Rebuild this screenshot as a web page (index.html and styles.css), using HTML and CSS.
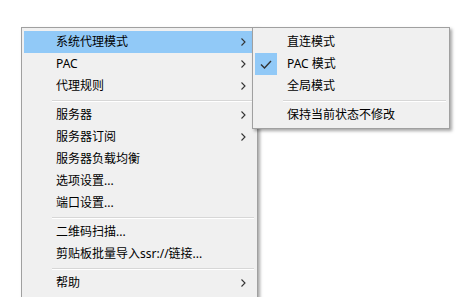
FILE: index.html
```html
<!DOCTYPE html>
<html>

<head>
    <meta charset="utf-8">
    <title>系统代理模式</title>
    <link rel="stylesheet" href="styles.css">
</head>

<body>
    <div class="desk">

        <div class="menu main">
            <div class="item active">系统代理模式<span class="arrow"><svg width="5" height="8" viewBox="0 0 5 8"><polyline points="0.5,0.5 4,4 0.5,7.5" /></svg></span></div>
            <div class="item">PAC<span class="arrow"><svg width="5" height="8" viewBox="0 0 5 8"><polyline points="0.5,0.5 4,4 0.5,7.5" /></svg></span></div>
            <div class="item">代理规则<span class="arrow"><svg width="5" height="8" viewBox="0 0 5 8"><polyline points="0.5,0.5 4,4 0.5,7.5" /></svg></span></div>
            <div class="sep"></div>
            <div class="item">服务器<span class="arrow"><svg width="5" height="8" viewBox="0 0 5 8"><polyline points="0.5,0.5 4,4 0.5,7.5" /></svg></span></div>
            <div class="item">服务器订阅<span class="arrow"><svg width="5" height="8" viewBox="0 0 5 8"><polyline points="0.5,0.5 4,4 0.5,7.5" /></svg></span></div>
            <div class="item">服务器负载均衡</div>
            <div class="item">选项设置...</div>
            <div class="item">端口设置...</div>
            <div class="sep"></div>
            <div class="item">二维码扫描...</div>
            <div class="item">剪贴板批量导入ssr://链接...</div>
            <div class="sep"></div>
            <div class="item">帮助<span class="arrow"><svg width="5" height="8" viewBox="0 0 5 8"><polyline points="0.5,0.5 4,4 0.5,7.5" /></svg></span></div>
        </div>

        <!-- submenu of 系统代理模式 -->
        <div class="menu sub">
            <div class="item">直连模式</div>
            <div class="item"><span class="check"><svg width="12" height="9" viewBox="0 0 12 9"><polyline points="1,4.5 4.5,8 11,1" /></svg></span>PAC 模式</div>
            <div class="item">全局模式</div>
            <div class="sep"></div>
            <div class="item">保持当前状态不修改</div>
        </div>

    </div>
</body>

</html>
```
FILE: styles.css
```css
html, body {
    margin: 0;
    height: 100%;
    overflow: hidden;
    background-color: #ffffff;
}

.desk {
    position: relative;
    box-sizing: border-box;
    height: 100%;
    padding: 27px 0 0 21px;
    font-family: "Noto Sans", "Noto Sans CJK SC", sans-serif;
    font-size: 12px;
    color: #000000;
}

.menu {
    box-sizing: border-box;
    background-color: #f0f0f0;
    border: 1px solid #a0a0a0;
    padding: 3px 2px;
    box-shadow: 2px 2px 3px rgba(0, 0, 0, 0.35);
}

.main {
    width: 237px;
    height: 300px;
}

.sub {
    position: absolute;
    left: 252px;
    top: 27px;
    width: 198px;
    padding-bottom: 2px;
}

.item {
    position: relative;
    height: 22px;
    line-height: 22px;
    padding-left: 32px;
    white-space: nowrap;
}

.active {
    background-color: #91c9f7;
}

.arrow {
    position: absolute;
    left: 217px;
    top: 7px;
    line-height: 0;
}

.arrow svg polyline {
    fill: none;
    stroke: #333333;
    stroke-width: 1.1;
}

.check {
    position: absolute;
    left: 0;
    top: 0;
    width: 22px;
    height: 22px;
    background-color: #91c9f7;
    display: flex;
    align-items: center;
    justify-content: center;
}

.check svg polyline {
    fill: none;
    stroke: #333333;
    stroke-width: 1.4;
}

.sep {
    height: 0;
    margin: 3px 1px 2px 28px;
    border-top: 1px solid #d7d7d7;
    border-bottom: 1px solid #ffffff;
}
```
